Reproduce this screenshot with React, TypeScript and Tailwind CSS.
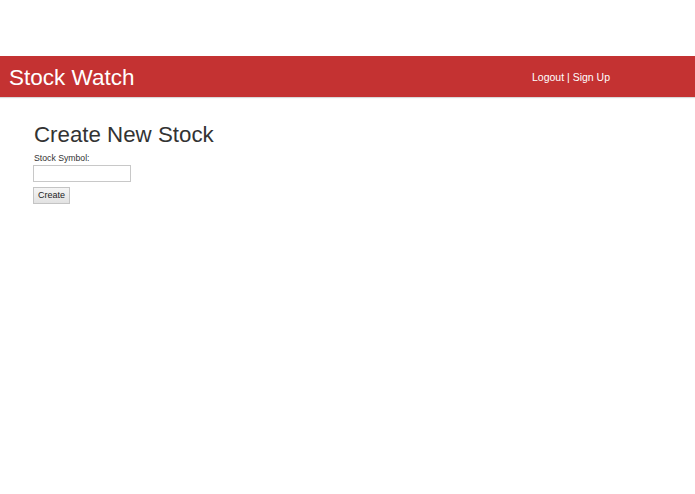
export default function App() {
  return (
    <div className="min-h-[494px] bg-white font-['Liberation_Sans',Arial,sans-serif] text-[#333]">
      <div className="h-14" />
      <nav className="flex h-[41px] items-center justify-between bg-[#c43232] pl-[9px] pr-[85px] shadow-[0_1px_1px_rgba(0,0,0,0.15)]">
        <span className="pt-[3px] text-[22.5px] leading-none text-white">Stock Watch</span>
        <span className="pt-[2px] text-[10.5px] text-white">Logout | Sign Up</span>
      </nav>
      <main className="px-[33px] pt-[25px]">
        <h1 className="pl-px text-[22.3px] leading-[26px] text-[#333]">Create New Stock</h1>
        <form className="mt-[5px] flex flex-col items-start" onSubmit={(e) => e.preventDefault()}>
          <label className="pl-px text-[8.7px] leading-[10px] text-[#333]">Stock Symbol:</label>
          <input
            type="text"
            className="mt-[2px] h-[17px] w-[98px] border border-[#c8c8c8] bg-white outline-none"
          />
          <button
            type="submit"
            className="mt-[5px] h-[17px] w-[37px] border border-[#c4c4c4] bg-gradient-to-b from-[#f5f5f5] to-[#e2e2e2] text-[9px] text-[#222]"
          >
            Create
          </button>
        </form>
      </main>
    </div>
  );
}
